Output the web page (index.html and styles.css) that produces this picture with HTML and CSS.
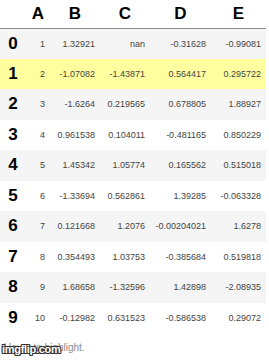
FILE: index.html
```html
<!DOCTYPE html>
<html>
<head>
<meta charset="utf-8">
<link rel="stylesheet" href="styles.css">
</head>
<body>
<div class="page">
<table class="df">
<colgroup>
<col class="c-idx"><col class="c-a"><col class="c-b"><col class="c-c"><col class="c-d"><col class="c-e">
</colgroup>
<thead>
<tr class="head"><th></th><th>A</th><th>B</th><th>C</th><th>D</th><th>E</th></tr>
</thead>
<tbody>
<tr class="even"><th>0</th><td>1</td><td>1.32921</td><td>nan</td><td>-0.31628</td><td>-0.99081</td></tr>
<tr class="hl"><th>1</th><td>2</td><td>-1.07082</td><td>-1.43871</td><td>0.564417</td><td>0.295722</td></tr>
<tr class="even"><th>2</th><td>3</td><td>-1.6264</td><td>0.219565</td><td>0.678805</td><td>1.88927</td></tr>
<tr class="odd"><th>3</th><td>4</td><td>0.961538</td><td>0.104011</td><td>-0.481165</td><td>0.850229</td></tr>
<tr class="even"><th>4</th><td>5</td><td>1.45342</td><td>1.05774</td><td>0.165562</td><td>0.515018</td></tr>
<tr class="odd"><th>5</th><td>6</td><td>-1.33694</td><td>0.562861</td><td>1.39285</td><td>-0.063328</td></tr>
<tr class="even"><th>6</th><td>7</td><td>0.121668</td><td>1.2076</td><td>-0.00204021</td><td>1.6278</td></tr>
<tr class="odd"><th>7</th><td>8</td><td>0.354493</td><td>1.03753</td><td>-0.385684</td><td>0.519818</td></tr>
<tr class="even"><th>8</th><td>9</td><td>1.68658</td><td>-1.32596</td><td>1.42898</td><td>-2.08935</td></tr>
<tr class="odd"><th>9</th><td>10</td><td>-0.12982</td><td>0.631523</td><td>-0.586538</td><td>0.29072</td></tr>
</tbody>
</table>
<div class="foot">
<p class="hint">Hover to highlight.</p>
<span class="mark">imgflip.com</span>
</div>
</div>
</body>
</html>
```
FILE: styles.css
```css
html, body {
  margin: 0;
  padding: 0;
  background: #ffffff;
}
.page {
  width: 269px;
  height: 360px;
  overflow: hidden;
  font-family: "Liberation Sans", Arial, sans-serif;
}
.df {
  border-collapse: collapse;
  table-layout: fixed;
  width: 266px;
}
.c-idx { width: 26px; }
.c-a { width: 24px; }
.c-b { width: 50px; }
.c-c { width: 50px; }
.c-d { width: 61px; }
.c-e { width: 55px; }
.head {
  height: 28px;
}
.head th {
  font-size: 17px;
  font-weight: bold;
  color: #000;
  text-align: center;
  border-bottom: 1px solid #8a8a8a;
  padding: 0;
  vertical-align: middle;
}
tbody tr {
  height: 30.5px;
}
tbody th {
  font-size: 17px;
  font-weight: bold;
  color: #000;
  text-align: center;
  padding: 0;
}
tbody td {
  font-size: 9px;
  color: #444;
  text-align: right;
  padding: 0 5px 0 0;
  white-space: nowrap;
}
.even { background: #f5f5f5; }
.odd { background: #ffffff; }
.hl { background: #ffffa0; }
.foot {
  position: relative;
  padding: 9px 0 0 4px;
}
.hint {
  margin: 0;
  font-size: 10px;
  color: #8c8c8c;
}
.mark {
  position: absolute;
  left: 2px;
  top: 10px;
  font-size: 11px;
  font-weight: bold;
  color: #fff;
  letter-spacing: -0.3px;
  text-shadow: -1px -1px 0 #333, 1px -1px 0 #333, -1px 1px 0 #333, 1px 1px 0 #333, 0 1px 0 #333, 0 -1px 0 #333, 1px 0 0 #333, -1px 0 0 #333;
}
```
